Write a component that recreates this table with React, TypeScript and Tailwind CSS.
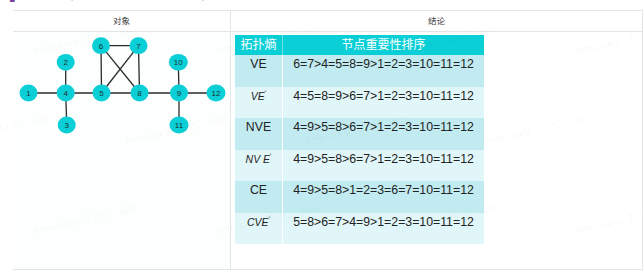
import React from "react";

const nodes: [string, number, number][] = [
  ["1", 28.5, 93],
  ["2", 65.7, 62.3],
  ["3", 66.7, 125],
  ["4", 65.7, 93],
  ["5", 101.5, 93],
  ["6", 101, 45.7],
  ["7", 138.5, 45.7],
  ["8", 139.5, 93],
  ["9", 179, 93],
  ["10", 178.3, 62.3],
  ["11", 179, 125],
  ["12", 216, 93],
];

const edges: [string, string][] = [
  ["1", "4"],
  ["2", "4"],
  ["3", "4"],
  ["4", "5"],
  ["5", "6"],
  ["6", "7"],
  ["7", "8"],
  ["6", "8"],
  ["7", "5"],
  ["5", "8"],
  ["8", "9"],
  ["9", "10"],
  ["9", "11"],
  ["9", "12"],
];

function pos(id: string) {
  const n = nodes.find((x) => x[0] === id)!;
  return { x: n[1], y: n[2] };
}

function Graph() {
  return (
    <svg width="217" height="120" viewBox="13 32 217 120" className="block">
      {edges.map(([a, b]) => {
        const p = pos(a);
        const q = pos(b);
        return (
          <line key={a + "-" + b} x1={p.x} y1={p.y} x2={q.x} y2={q.y} stroke="#2a2a2a" strokeWidth="1.3" />
        );
      })}
      {nodes.map(([id, x, y]) => (
        <g key={id}>
          <ellipse cx={x} cy={y} rx={id.length > 1 ? 9.5 : 9} ry="8.4" fill="#0acfd6" />
          <text
            x={x}
            y={y + 3}
            textAnchor="middle"
            fontSize="8"
            fill="#1f2d2e"
            fontFamily="Liberation Sans, Arial, sans-serif"
          >
            {id}
          </text>
        </g>
      ))}
    </svg>
  );
}

type Row = { name: React.ReactNode; order: string; dark: boolean };

const rows: Row[] = [
  { name: "VE", order: "6=7>4=5=8=9>1=2=3=10=11=12", dark: true },
  {
    name: (
      <span className="italic text-[10.5px]">
        VE<sup className="text-[7px] not-italic">ʹ</sup>
      </span>
    ),
    order: "4=5=8=9>6=7>1=2=3=10=11=12",
    dark: false,
  },
  { name: "NVE", order: "4=9>5=8>6=7>1=2=3=10=11=12", dark: true },
  {
    name: (
      <span className="italic text-[10.5px]">
        NV E<sup className="text-[7px] not-italic">ʹ</sup>
      </span>
    ),
    order: "4=9>5=8>6=7>1=2=3=10=11=12",
    dark: false,
  },
  { name: "CE", order: "4=9>5=8>1=2=3=6=7=10=11=12", dark: true },
  {
    name: (
      <span className="italic text-[10.5px]">
        CVE<sup className="text-[7px] not-italic">ʹ</sup>
      </span>
    ),
    order: "5=8>6=7>4=9>1=2=3=10=11=12",
    dark: false,
  },
];

function RankTable() {
  return (
    <div className="w-[249px] text-[12.3px] text-[#222]">
      <div className="flex h-[20px] bg-[#0acfd6] text-[12px] text-white">
        <div className="flex w-[48px] items-center justify-center border-r border-white/40">拓扑熵</div>
        <div className="flex flex-1 items-center justify-center">节点重要性排序</div>
      </div>
      {rows.map((r, i) => (
        <div key={i} className={`flex h-[31.5px] ${r.dark ? "bg-[#c1ebf0]" : "bg-[#e1f6f8]"}`}>
          <div className="w-[48px] border-r border-white pt-[2px] text-center leading-[14px]">{r.name}</div>
          <div className="flex-1 pt-[2px] text-center leading-[14px]">{r.order}</div>
        </div>
      ))}
    </div>
  );
}

const marks: [number, number][] = [
  [127, -33],
  [307, -33],
  [487, -33],
  [35, 57],
  [217, 57],
  [397, 57],
  [577, 57],
  [-53, 147],
  [127, 147],
  [307, 147],
  [487, 147],
  [35, 237],
  [217, 237],
  [397, 237],
  [577, 237],
];

function Watermarks() {
  return (
    <div className="pointer-events-none absolute inset-0">
      {marks.map(([x, y], i) => (
        <div
          key={i}
          className="absolute origin-bottom-left -rotate-[13deg] whitespace-nowrap text-[8px] leading-[10px] text-black/[0.05]"
          style={{ left: x, top: y - 10 }}
        >
          Rosso Wang（王红红） 8030
        </div>
      ))}
    </div>
  );
}

export default function App() {
  return (
    <div className="relative h-[273px] w-[644px] overflow-hidden bg-white font-['Liberation_Sans','Noto_Sans_CJK_SC',sans-serif]">
      <div className="relative h-[10px] overflow-hidden">
        <div className="-mt-[14px] flex gap-[20px] pl-[10px] text-[13px] font-bold leading-[16px] text-[#333]">
          <span className="text-[#7b3fa0]">▌</span>
          <span>模型拓扑熵 — 节点重要性 排序 对比 分析 结果</span>
        </div>
      </div>
      <div className="ml-[13px] w-[630px] border-b border-r border-t border-[#e2e6e6]">
        <div className="flex h-[21px] border-b border-[#e2e6e6] text-[8.5px] text-[#444]">
          <div className="flex w-[218px] items-center justify-center border-r border-[#e2e6e6]">对象</div>
          <div className="flex flex-1 items-center justify-center">结论</div>
        </div>
        <div className="flex h-[237px]">
          <div className="w-[218px] border-r border-[#e2e6e6] bg-[#fdfefe]">
            <Graph />
          </div>
          <div className="flex-1 pl-[4px] pt-[3px]">
            <RankTable />
          </div>
        </div>
      </div>
      <Watermarks />
    </div>
  );
}
